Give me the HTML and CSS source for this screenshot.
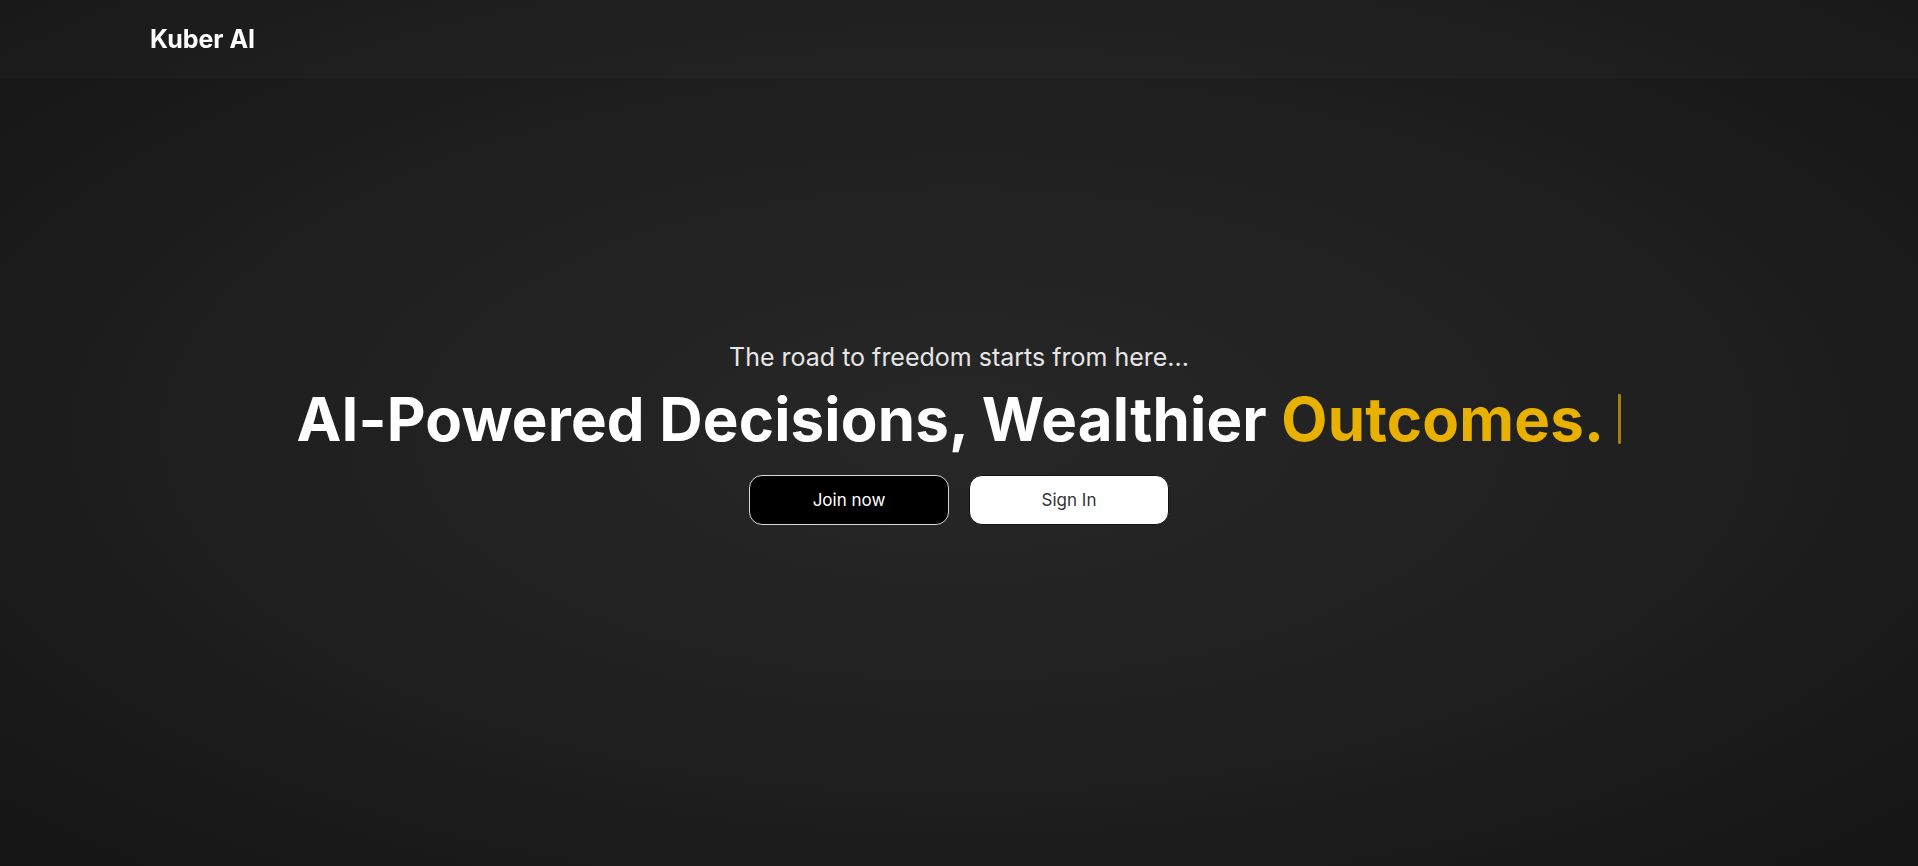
FILE: index.html
```html
<!DOCTYPE html>
<html lang="en">
<head>
<meta charset="utf-8">
<title>Kuber AI</title>
<link rel="stylesheet" href="styles.css">
</head>
<body>
<header class="topbar">
  <div class="brand">Kuber AI</div>
</header>
<main class="hero">
  <p class="tagline">The road to freedom starts from here...</p>
  <h1 class="headline"><span class="white">AI-Powered Decisions, Wealthier </span><span class="gold">Outcomes.</span><span class="cursor"></span></h1>
  <div class="actions">
    <button class="btn btn-dark">Join now</button>
    <button class="btn btn-light">Sign In</button>
  </div>
</main>
</body>
</html>
```
FILE: styles.css
```css
* { box-sizing: border-box; }
html, body { margin: 0; height: 100%; }
body {
  font-family: Inter, "Noto Sans", sans-serif;
  background: radial-gradient(ellipse at 50% 50%, #272727 0%, #1f1f1f 55%, #151515 100%);
  color: #fff;
  overflow: hidden;
}
.topbar {
  position: fixed;
  top: 0; left: 0; right: 0;
  height: 78px;
  background: rgba(255,255,255,0.02);
  display: flex;
  align-items: center;
  padding-left: 150px;
}
.brand {
  font-size: 25px;
  font-weight: 700;
}
.hero {
  height: 100vh;
  display: flex;
  flex-direction: column;
  align-items: center;
  justify-content: center;
}
.tagline {
  margin: 0;
  font-size: 25px;
  line-height: 30px;
  color: #e6e6e6;
}
.headline {
  margin: 11px 0 0;
  width: 1325px;
  font-size: 60px;
  line-height: 72px;
  font-weight: 700;
  letter-spacing: 0.18px;
  display: flex;
  align-items: center;
}
.white { white-space: pre; }
.gold { color: #e8b100; }
.cursor {
  display: inline-block;
  width: 3px;
  height: 50px;
  background: #a57f0c;
  margin-left: 14px;
  border-radius: 1px;
}
.actions {
  margin-top: 20px;
  display: flex;
  gap: 20px;
}
.btn {
  width: 200px;
  height: 50px;
  border-radius: 13px;
  font-family: Inter, "Noto Sans", sans-serif;
  font-size: 17px;
}
.btn-dark {
  background: #000;
  color: #fff;
  border: 1px solid #d8d8d8;
}
.btn-light {
  background: #fff;
  color: #333;
  border: 1px solid #111;
}
```
